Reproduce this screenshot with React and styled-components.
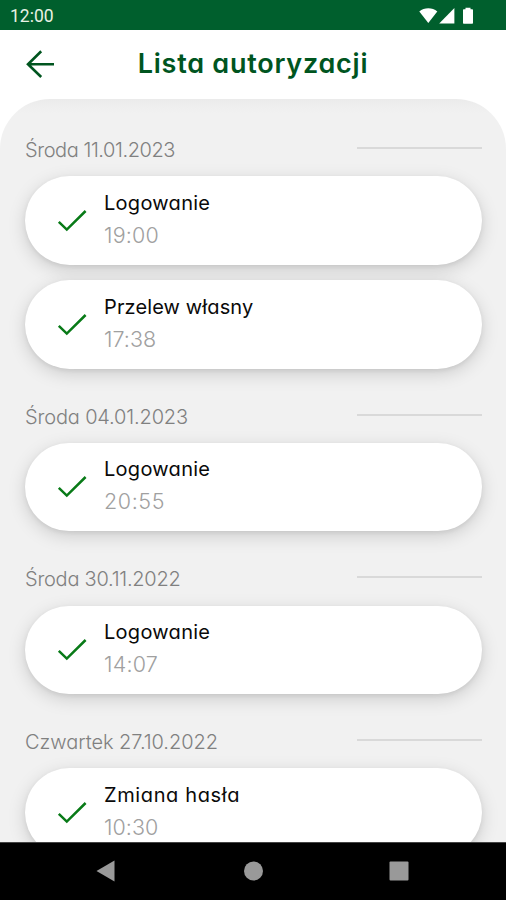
import React from "react";
import styled, { createGlobalStyle } from "styled-components";

const GlobalStyle = createGlobalStyle`
  * {
    box-sizing: border-box;
  }
  body {
    margin: 0;
    overflow: hidden;
    font-family: Inter, "Liberation Sans", sans-serif;
    font-feature-settings: "cv11";
  }
  svg {
    display: block;
  }
`;

const Screen = styled.div`
  display: flex;
  flex-direction: column;
  height: 900px;
  width: 506px;
  overflow: hidden;
  background: #ffffff;
`;

const StatusBar = styled.div`
  display: flex;
  flex: none;
  align-items: center;
  justify-content: space-between;
  height: 29.5px;
  padding: 2px 31px 0 10px;
  background: #005f2d;
`;

const Clock = styled.span`
  font-family: Roboto, sans-serif;
  font-size: 17.5px;
  line-height: 20px;
  color: #e8f1e4;
`;

const Header = styled.header`
  display: grid;
  flex: none;
  grid-template-columns: 82px 1fr 82px;
  align-items: center;
  height: 69px;
`;

const BackButton = styled.button`
  width: 28px;
  margin-left: 26px;
  padding: 0;
  border: none;
  background: none;
`;

const Title = styled.h1`
  margin: 0;
  font-size: 27px;
  font-weight: 600;
  line-height: 36px;
  letter-spacing: 0.75px;
  text-align: center;
  white-space: nowrap;
  color: #00551f;
`;

const Sheet = styled.main`
  flex: 1;
  min-height: 0;
  overflow: hidden;
  padding: 35.5px 24px 0 25px;
  border-radius: 50px 50px 0 0;
  background: linear-gradient(#ebebeb, #f1f1f1 14px);
`;

const Group = styled.section`
  margin-bottom: 31.9px;
`;

const GroupHeading = styled.div`
  display: flex;
  align-items: center;
  justify-content: space-between;
  height: 32px;
  margin-bottom: 10.3px;
`;

const DateLabel = styled.h2`
  margin: 0;
  font-size: 20px;
  font-weight: 300;
  line-height: 32px;
  letter-spacing: ${props => props.$tracking}px;
  white-space: nowrap;
  color: #808080;
`;

const Rule = styled.div`
  width: 125px;
  height: 2px;
  margin-bottom: 4px;
  background: #d9d9d9;
`;

const Cards = styled.div`
  display: flex;
  flex-direction: column;
  gap: 15.5px;
`;

const Card = styled.article`
  display: flex;
  align-items: center;
  height: 88.5px;
  padding-left: 32px;
  border-radius: 45px;
  background: #ffffff;
  box-shadow: 0 5px 18px rgba(0, 0, 0, 0.15), 0 2px 5px rgba(0, 0, 0, 0.07);
`;

const CardText = styled.div`
  margin-left: 17px;
  padding-bottom: 3px;
`;

const Operation = styled.div`
  font-size: 20px;
  font-weight: 400;
  line-height: 32px;
  letter-spacing: ${props => props.$tracking}px;
  white-space: nowrap;
  color: #0a0a0a;
`;

const Time = styled.div`
  font-size: 21.5px;
  font-weight: 350;
  line-height: 33px;
  letter-spacing: ${props => props.$tracking}px;
  color: #a0a0a0;
`;

const NavBar = styled.nav`
  display: flex;
  flex: none;
  align-items: center;
  justify-content: space-between;
  height: 58px;
  padding: 0 97px 1px 96px;
  border-top: 1px solid #444444;
  background: #000000;
`;

const StatusIcons = () => (
  <svg width="56" height="18" viewBox="0 0 56 18" fill="#ffffff">
    <path d="M0.3 4.6C5.3 0.2 13.3 0.2 18.3 4.6L9.3 16Z" />
    <path d="M20.2 16.5H35.4V1Z" />
    <path d="M46.5 0.7h5v1.6h1.5c.6 0 1 .4 1 1v12.5c0 .6-.4 1-1 1h-8c-.6 0-1-.4-1-1V3.3c0-.6.4-1 1-1H46.5Z" />
  </svg>
);

const BackIcon = () => (
  <svg width="28" height="28" viewBox="0 0 28 28" fill="none" stroke="#00551f" strokeWidth="2.6">
    <path d="M15.2 1.2 2 14.2 15.2 27M2 14.2H28" />
  </svg>
);

const CheckIcon = () => (
  <svg width="30" height="24" viewBox="0 0 30 24" fill="none" stroke="#087a17" strokeWidth="2.5">
    <path d="M1.8 12.8 9.8 20.6 28.6 2" />
  </svg>
);

const NavIcon = ({ children }) => (
  <svg width="20" height="22" viewBox="0 0 20 22" fill="#999999">
    {children}
  </svg>
);

const groups = [
  {
    date: "Środa 11.01.2023",
    tracking: -0.43,
    items: [
      { name: "Logowanie", nameTracking: 0.28, time: "19:00", timeTracking: 0.2 },
      { name: "Przelew własny", nameTracking: 0.12, time: "17:38", timeTracking: 0.05 }
    ]
  },
  {
    date: "Środa 04.01.2023",
    tracking: -0.15,
    items: [{ name: "Logowanie", nameTracking: 0.28, time: "20:55", timeTracking: 0.6 }]
  },
  {
    date: "Środa 30.11.2022",
    tracking: -0.25,
    items: [{ name: "Logowanie", nameTracking: 0.28, time: "14:07", timeTracking: 0.2 }]
  },
  {
    date: "Czwartek 27.10.2022",
    tracking: -0.05,
    items: [{ name: "Zmiana hasła", nameTracking: 0.62, time: "10:30", timeTracking: 0.05 }]
  }
];

const AuthorizationCard = ({ item }) => (
  <Card>
    <CheckIcon />
    <CardText>
      <Operation $tracking={item.nameTracking}>{item.name}</Operation>
      <Time $tracking={item.timeTracking}>{item.time}</Time>
    </CardText>
  </Card>
);

const App = () => {
  return (
    <Screen>
      <GlobalStyle />
      <StatusBar>
        <Clock>12:00</Clock>
        <StatusIcons />
      </StatusBar>
      <Header>
        <BackButton aria-label="Wstecz">
          <BackIcon />
        </BackButton>
        <Title>Lista autoryzacji</Title>
      </Header>
      <Sheet>
        {groups.map(group => (
          <Group key={group.date}>
            <GroupHeading>
              <DateLabel $tracking={group.tracking}>{group.date}</DateLabel>
              <Rule />
            </GroupHeading>
            <Cards>
              {group.items.map(item => (
                <AuthorizationCard key={item.time} item={item} />
              ))}
            </Cards>
          </Group>
        ))}
      </Sheet>
      <NavBar>
        <NavIcon>
          <path d="M0.5 11 18.5 0.5V21.5Z" />
        </NavIcon>
        <NavIcon>
          <circle cx="10.5" cy="11" r="9.5" />
        </NavIcon>
        <NavIcon>
          <rect x="0.5" y="1.5" width="19" height="19" rx="1" />
        </NavIcon>
      </NavBar>
    </Screen>
  );
};

export default App;
